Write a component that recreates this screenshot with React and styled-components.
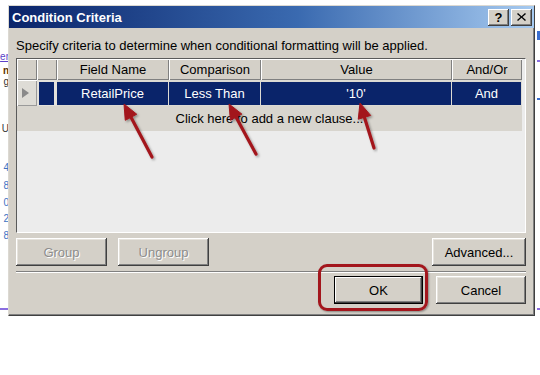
import React from 'react'
import styled, { createGlobalStyle, css } from 'styled-components'

const GlobalStyle = createGlobalStyle`
  html, body {
    margin: 0;
    padding: 0;
    background: #fff;
  }
  body {
    font-family: "Liberation Sans", Arial, sans-serif;
    font-size: 13px;
  }
`

const columns = [
  { key: 'ind', title: '', width: 20 },
  { key: 'sel', title: '', width: 20 },
  { key: 'field', title: 'Field Name', width: 112 },
  { key: 'cmp', title: 'Comparison', width: 92 },
  { key: 'value', title: 'Value', width: 191 },
  { key: 'andor', title: 'And/Or', width: 70 },
]

const clause = { field: 'RetailPrice', cmp: 'Less Than', value: "'10'", andor: 'And' }

// bits of the window behind the dialog, cut off at the left edge
const leftBits = [
  { text: 'er', top: 52, color: '#5b3fc8', underline: true },
  { text: 'n', top: 4, color: '#5a3300', bold: true },
  { text: 'g', top: 1, color: '#333', underline: true },
  { text: 'U', top: 37, color: '#3a3a3a' },
  { text: '4', top: 29, color: '#3d72c2' },
  { text: '8', top: 8, color: '#3d72c2' },
  { text: '0', top: 7, color: '#3d72c2' },
  { text: '2', top: 6, color: '#3d72c2' },
  { text: '8', top: 7, color: '#3d72c2' },
]

const arrows = [
  { x1: 152, y1: 157, x2: 124, y2: 104 },
  { x1: 256, y1: 154, x2: 229, y2: 104 },
  { x1: 374, y1: 148, x2: 360, y2: 103 },
]

function arrowShape({ x1, y1, x2, y2 }) {
  const len = Math.hypot(x2 - x1, y2 - y1)
  const dx = (x2 - x1) / len
  const dy = (y2 - y1) / len
  const L = 15
  const W = 6.5
  const bx = x2 - dx * L
  const by = y2 - dy * L
  const head = `${x2},${y2} ${bx - dy * W},${by + dx * W} ${bx + dy * W},${by - dx * W}`
  return { head, bx: bx + dx * 2, by: by + dy * 2 }
}

function CloseIcon() {
  return (
    <svg width="9" height="8" viewBox="0 0 9 8">
      <path d="M1 0 L4.5 3.3 L8 0 L9 1 L5.5 4 L9 7 L8 8 L4.5 4.7 L1 8 L0 7 L3.5 4 L0 1 Z" fill="#000" />
    </svg>
  )
}

export default function App() {
  return (
    <Page>
      <GlobalStyle />
      <Desktop>
        <LeftStrip>
          {leftBits.map((b, i) => (
            <Bit key={i} $top={b.top} $color={b.color} $underline={b.underline} $bold={b.bold}>
              {b.text}
            </Bit>
          ))}
          <Mark $top={67} $color="#8a6ee0" />
        </LeftStrip>

        <Dialog>
          <TitleBar>
            <Title>Condition Criteria</Title>
            <TitleButtons>
              <CaptionButton>?</CaptionButton>
              <CaptionButton><CloseIcon /></CaptionButton>
            </TitleButtons>
          </TitleBar>

          <Body>
            <Hint>Specify criteria to determine when conditional formatting will be applied.</Hint>

            <GridFrame>
              <Grid $cols={columns.map(c => `${c.width}px`).join(' ')}>
                {columns.map(c => (
                  <HeaderCell key={c.key}>{c.title}</HeaderCell>
                ))}

                <IndicatorCell><Triangle /></IndicatorCell>
                <SelectCell />
                <DataCell>{clause.field}</DataCell>
                <DataCell>{clause.cmp}</DataCell>
                <DataCell>{clause.value}</DataCell>
                <DataCell>{clause.andor}</DataCell>

                <NewRow>Click here to add a new clause...</NewRow>
              </Grid>
            </GridFrame>

            <ButtonRow>
              <Button $w={91} disabled>Group</Button>
              <Button $w={91} disabled>Ungroup</Button>
              <Spacer />
              <Button $w={94}>Advanced...</Button>
            </ButtonRow>

            <Separator />

            <ButtonRow $end>
              <Button $w={89} $default>OK</Button>
              <Button $w={90}>Cancel</Button>
            </ButtonRow>
          </Body>
        </Dialog>

        <RightStrip>
          <Mark $top={31} $color="#3b6fd0" $h={9} />
          <Mark $top={20} $color="#8a6ee0" $h={2} />
          <Mark $top={36} $color="#3b6fd0" $h={2} />
          <Mark $top={208} $color="#8a6ee0" $h={2} />
        </RightStrip>
      </Desktop>

      <Highlight />

      <Overlay width="540" height="375" viewBox="0 0 540 375">
        <defs>
          <filter id="shade" x="-20%" y="-20%" width="140%" height="140%">
            <feDropShadow dx="1.5" dy="1.5" stdDeviation="1.2" floodColor="#000" floodOpacity="0.35" />
          </filter>
        </defs>
        {arrows.map((a, i) => {
          const s = arrowShape(a)
          return (
            <g key={i} filter="url(#shade)" fill="#a3161d" stroke="#a3161d">
              <line x1={a.x1} y1={a.y1} x2={s.bx} y2={s.by} strokeWidth="3.2" strokeLinecap="round" />
              <polygon points={s.head} strokeWidth="1" strokeLinejoin="round" />
            </g>
          )
        })}
      </Overlay>
    </Page>
  )
}

const Page = styled.div`
  position: relative;
  width: 540px;
  height: 375px;
  overflow: hidden;
  background: #fff;
`

const Desktop = styled.div`
  display: flex;
  align-items: flex-start;
`

const LeftStrip = styled.div`
  width: 8px;
  height: 316px;
  overflow: hidden;
  display: flex;
  flex-direction: column;
  align-items: flex-end;
  font-size: 10px;
  line-height: 10px;
`

const Bit = styled.span`
  margin-top: ${p => p.$top}px;
  margin-right: -1px;
  color: ${p => p.$color};
  font-weight: ${p => (p.$bold ? 700 : 400)};
  text-decoration: ${p => (p.$underline ? 'underline' : 'none')};
`

const Mark = styled.span`
  display: block;
  align-self: stretch;
  margin-top: ${p => p.$top}px;
  height: ${p => p.$h || 2}px;
  background: ${p => p.$color};
`

const RightStrip = styled.div`
  width: 5px;
  height: 316px;
  display: flex;
  flex-direction: column;
  padding-left: 2px;
  box-sizing: border-box;
`

const Dialog = styled.div`
  margin-top: 5px;
  width: 527px;
  height: 311px;
  box-sizing: border-box;
  background: #d4d0c8;
  border: 1px solid;
  border-color: #dcd9d2 #404040 #404040 #dcd9d2;
  box-shadow: inset -1px -1px #808080;
  display: flex;
  flex-direction: column;
`

const TitleBar = styled.div`
  height: 22px;
  display: flex;
  align-items: center;
  justify-content: space-between;
  padding: 0 2px 0 3px;
  background: linear-gradient(to right, #0a246a 0%, #3a6ab0 55%, #a6caf0 100%);
`

const Title = styled.span`
  color: #fff;
  font-weight: 700;
  font-size: 13px;
`

const TitleButtons = styled.div`
  display: flex;
  gap: 2px;
`

const CaptionButton = styled.div`
  width: 21px;
  height: 17px;
  box-sizing: border-box;
  display: flex;
  align-items: center;
  justify-content: center;
  background: #d4d0c8;
  font-weight: 700;
  font-size: 13px;
  color: #000;
  box-shadow: inset -1px -1px #404040, inset 1px 1px #fff, inset -2px -2px #808080;
`

const Body = styled.div`
  flex: 1;
  display: flex;
  flex-direction: column;
  padding: 10px 8px 0 7px;
`

const Hint = styled.div`
  line-height: 16px;
  color: #000;
  white-space: nowrap;
`

const GridFrame = styled.div`
  margin-top: 4px;
  height: 175px;
  box-sizing: border-box;
  border: 1px solid;
  border-color: #5a5a5a #fff #fff #5a5a5a;
  background: #ececec;
  overflow: hidden;
`

const Grid = styled.div`
  display: grid;
  grid-template-columns: ${p => p.$cols};
  grid-template-rows: 21px 26px 25px;
`

const HeaderCell = styled.div`
  background: #d4d0c8;
  box-shadow: inset 1px 1px #fff, inset -1px -1px #808080;
  text-align: center;
  line-height: 21px;
  color: #000;
`

const IndicatorCell = styled.div`
  background: #dedcd6;
  box-shadow: inset 1px 1px #fff, inset -1px -1px #9a9a9a;
  display: flex;
  align-items: center;
  padding-left: 5px;
`

const Triangle = styled.span`
  width: 0;
  height: 0;
  border-top: 5px solid transparent;
  border-bottom: 5px solid transparent;
  border-left: 7px solid #8a8a8a;
`

const SelectCell = styled.div`
  background: #0a246a;
  border: 2px solid #e4e2dc;
  border-width: 2px 3px 1px 2px;
`

const DataCell = styled.div`
  background: #0a246a;
  color: #fff;
  text-align: center;
  line-height: 23px;
  border: 0 solid #dcdad3;
  border-width: 2px 1px 1px 0;
`

const NewRow = styled.div`
  grid-column: 1 / -1;
  background: #d8d5ce;
  text-align: center;
  line-height: 25px;
  color: #000;
`

const ButtonRow = styled.div`
  display: flex;
  gap: ${p => (p.$end ? 13 : 11)}px;
  justify-content: ${p => (p.$end ? 'flex-end' : 'flex-start')};
  margin-top: ${p => (p.$end ? 3 : 5)}px;
`

const Spacer = styled.div`
  flex: 1;
`

const Button = styled.button`
  width: ${p => p.$w}px;
  height: 28px;
  box-sizing: border-box;
  padding: 0;
  border: none;
  background: #d4d0c8;
  font-family: "Liberation Sans", Arial, sans-serif;
  font-size: 13px;
  color: #000;
  box-shadow: inset -1px -1px #404040, inset 1px 1px #fff, inset -2px -2px #808080, inset 2px 2px #e6e3dd;

  &:disabled {
    color: #8d8d8d;
    text-shadow: 1px 1px #fff;
  }

  ${p => p.$default && css`
    box-shadow: inset 0 0 0 1px #000, inset -2px -2px #404040, inset 2px 2px #fff, inset -3px -3px #808080;
  `}
`

const Separator = styled.div`
  margin-top: 5px;
  height: 2px;
  border-top: 1px solid #808080;
  border-bottom: 1px solid #fff;
  box-sizing: border-box;
`

const Highlight = styled.div`
  position: absolute;
  left: 318px;
  top: 264px;
  width: 110px;
  height: 47px;
  box-sizing: border-box;
  border: 3px solid #a3161d;
  border-radius: 9px;
  box-shadow: 1px 1px 2px rgba(0, 0, 0, 0.35);
  pointer-events: none;
`

const Overlay = styled.svg`
  position: absolute;
  left: 0;
  top: 0;
  pointer-events: none;
`
